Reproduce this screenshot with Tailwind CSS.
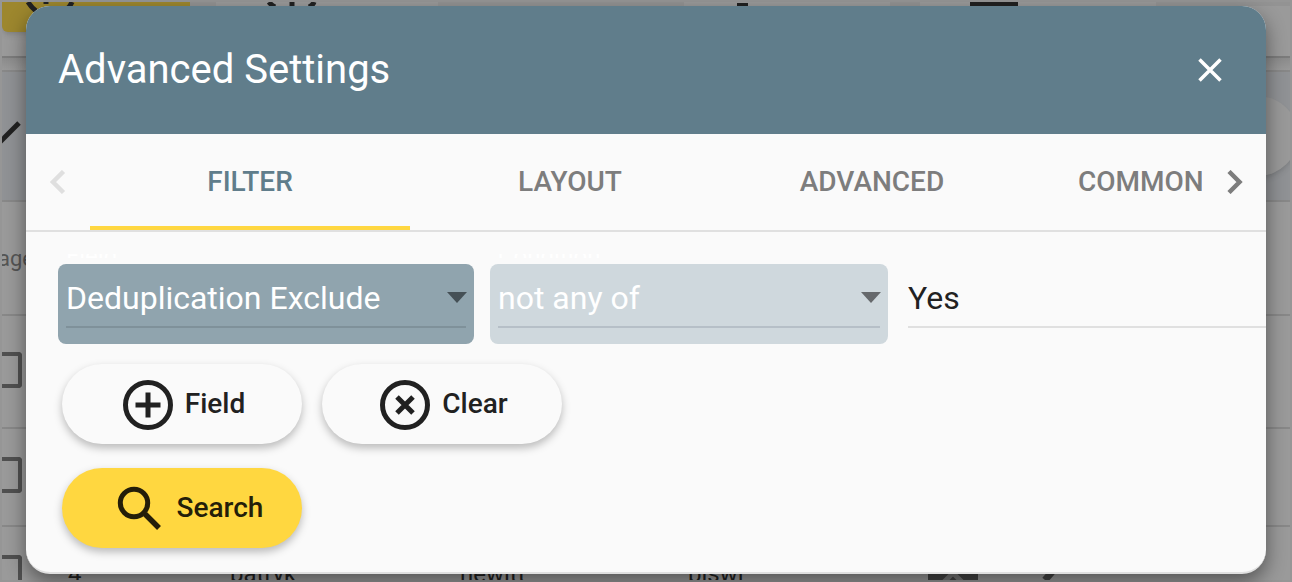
<!DOCTYPE html>
<html lang="en">
<head>
<meta charset="utf-8">
<meta name="viewport" content="width=device-width, initial-scale=1">
<title>Advanced Settings</title>
<script src="https://cdn.jsdelivr.net/npm/@tailwindcss/browser@4"></script>
</head>
<body class="bg-[#999] font-[Roboto,sans-serif] text-[#212121]">
<div class="relative flex min-h-screen flex-col overflow-hidden">

  <!-- Dimmed page behind the dialog -->
  <div class="absolute inset-0 overflow-hidden border-2 border-[#969696] bg-[#9a9a9a]" aria-hidden="true">
    <div class="flex h-14 items-start border-b-2 border-[#7c7c7c]">
      <div class="h-[30px] w-[188px] rounded-b-md bg-[#9d872e] shadow-md"></div>
    </div>
    <div class="h-3 bg-linear-to-b from-[#8c8c8c] to-[#999]"></div>
    <div class="flex h-[132px] items-center justify-between border-y-2 border-y-[#888] bg-[#909295]">
      <svg class="mb-2 h-6 w-5" viewBox="0 0 20 24"><path d="M-2 22 17 3" stroke="#212121" stroke-width="5"/></svg>
      <div class="-mr-2 size-20 rounded-full bg-[#999] shadow-md"></div>
    </div>
    <div class="flex h-[114px] items-center border-b-2 border-[#888]"><span class="-ml-1 text-[22px] text-[#555]">age</span></div>
    <div class="flex h-[113px] items-center border-b-2 border-[#888] pb-1"><div class="h-9 w-5 rounded-r border-4 border-l-0 border-[#505050]"></div></div>
    <div class="flex h-[98px] items-center border-b-2 border-[#888] pb-1"><div class="h-9 w-5 rounded-r border-4 border-l-0 border-[#505050]"></div></div>
    <div class="flex items-start pt-7"><div class="h-9 w-5 rounded-r border-4 border-l-0 border-[#505050]"></div></div>
    <svg class="absolute top-0 left-0 h-1 w-[1290px]" viewBox="0 0 1290 4">
      <path d="M188 0h26v4h-26zM436 0h246v4h-246zM888 0h30v4h-30zM1154 0h134v4h-134z" fill="#939393"/>
      <path d="M968 0h48v4h-48zM735 1h11v3h-11z" fill="#212121"/>
      <path d="M267 0q2 3 6 5M290 0v4M312 0q-1 3-5 5" stroke="#212121" stroke-width="5" fill="none"/>
    </svg>
    <svg class="absolute top-0 left-0 h-8 w-20" viewBox="0 0 80 32"><path d="M26 0q3 5 8 9M44 0v2M70 0q-2 5-6 8" stroke="#212121" stroke-width="5" fill="none"/></svg>
    <div class="absolute top-[560px] left-[66px] flex text-2xl leading-6 text-[#212121]">
      <span class="w-[162px]">4</span><span class="w-[230px]">patryk</span><span class="w-[228px]">hewitt</span><span class="w-60">biswi</span>
      <svg class="h-6 w-32" viewBox="0 0 128 24"><path d="M0 5h50v19H0z" fill="#444"/><path d="m12 24 13-13 13 13" stroke="#777" stroke-width="5" fill="none"/><path d="m117 18 7-8" stroke="#444" stroke-width="7"/></svg>
    </div>
  </div>

  <section role="dialog" aria-labelledby="title" class="relative mx-[26px] mt-1.5 mb-2 flex flex-1 flex-col overflow-hidden rounded-3xl border-b-2 border-[#e0e0e0] bg-[#fafafa] shadow-[0_8px_20px_0_rgba(0,0,0,0.45)]">
    <header class="flex h-32 shrink-0 items-center justify-between bg-[#607d8b] px-8 text-white">
      <h1 id="title" class="text-[40px] leading-12">Advanced Settings</h1>
      <button type="button" aria-label="Close" class="grid size-12 place-items-center">
        <svg class="size-6" viewBox="0 0 24 24" fill="none" stroke="currentColor" stroke-width="3.500"><path d="m1.500 1.500 21 21M22.500 1.500l-21 21"/></svg>
      </button>
    </header>

    <nav class="flex h-[98px] shrink-0 border-b-2 border-[#e0e0e0] text-[28px] font-medium text-[#7d7d7d]">
      <button type="button" disabled aria-label="Previous tabs" class="grid w-16 shrink-0 place-items-center text-[#dfdfdf]">
        <svg class="size-6" viewBox="0 0 24 24" fill="none" stroke="currentColor" stroke-width="4.500"><path d="M17.500 1.500 7 12l10.500 10.500"/></svg>
      </button>
      <div role="tablist" class="flex min-w-0 flex-1 overflow-hidden">
        <button type="button" role="tab" aria-selected="true" class="w-80 shrink-0 border-b-4 border-[#ffd740] pt-1 text-[#607d8b]">FILTER</button>
        <button type="button" role="tab" class="w-80 shrink-0">LAYOUT</button>
        <button type="button" role="tab" class="w-[284px] shrink-0">ADVANCED</button>
        <button type="button" role="tab" class="shrink-0 px-16">COMMON</button>
      </div>
      <button type="button" aria-label="Next tabs" class="grid w-16 shrink-0 place-items-center text-[#7d7d7d]">
        <svg class="size-6" viewBox="0 0 24 24" fill="none" stroke="currentColor" stroke-width="4.500"><path d="M7 1.500 17.500 12 7 22.500"/></svg>
      </button>
    </nav>

    <form class="flex flex-col pt-8 pl-8" onsubmit="return false">
      <div class="flex">
        <div class="relative mr-4 h-20 w-[416px] shrink-0 rounded-lg bg-[#90a4ae] px-2">
          <label for="field" class="absolute -top-2.5 left-2 h-1 overflow-hidden text-2xl leading-1 text-white">Field</label>
          <select id="field" class="h-16 w-full appearance-none border-b-2 border-[#7f919a] pt-1.5 text-[32px] text-white outline-none"><option>Deduplication Exclude</option></select>
          <svg class="pointer-events-none absolute top-7 right-[7px] h-3 w-5" viewBox="0 0 20 12"><path d="M0 0h20L10 11z" fill="#455056"/></svg>
        </div>
        <div class="relative mr-5 h-20 w-[398px] shrink-0 rounded-lg bg-[#cfd8dd] px-2">
          <label for="condition" class="absolute -top-2.5 left-2 h-1 overflow-hidden text-2xl leading-1 text-white">Condition</label>
          <select id="condition" class="h-16 w-full appearance-none border-b-2 border-[#b6bfc7] pt-1.5 text-[32px] text-white outline-none"><option>not any of</option></select>
          <svg class="pointer-events-none absolute top-7 right-[7px] h-3 w-5" viewBox="0 0 20 12"><path d="M0 0h20L10 11z" fill="#66696c"/></svg>
        </div>
        <input aria-label="Value" value="Yes" class="h-16 min-w-0 flex-1 border-b-2 border-[#e0e0e0] pt-1.5 text-[32px] outline-none">
      </div>
      <div class="mt-5 ml-1 flex gap-5 text-[28px] font-medium">
        <button type="button" class="flex h-20 w-60 items-center justify-center gap-3 rounded-full bg-[#fafafa] pl-1 shadow-[0_4px_8px_rgba(0,0,0,0.26)]">
          <svg class="mt-0.5 h-[50px] w-[50px]" viewBox="0 0 50 50" fill="none" stroke="currentColor" stroke-width="5"><circle cx="25" cy="25" r="22.500"/><path d="M25 12.500v25M12.500 25h25"/></svg>
          <span>Field</span>
        </button>
        <button type="button" class="flex h-20 w-60 items-center justify-center gap-3 rounded-full bg-[#fafafa] pl-1 shadow-[0_4px_8px_rgba(0,0,0,0.26)]">
          <svg class="mt-0.5 h-[50px] w-[50px]" viewBox="0 0 50 50" fill="none" stroke="currentColor" stroke-width="5"><circle cx="25" cy="25" r="22.500"/><path d="m17 17 16 16M33 17 17 33"/></svg>
          <span>Clear</span>
        </button>
      </div>
      <button type="submit" class="mt-6 mb-6 ml-1 flex h-20 w-60 items-center justify-center gap-4 rounded-full bg-[#ffd740] pl-4 text-[28px] font-medium text-[#241e09] shadow-[0_4px_8px_rgba(0,0,0,0.26)]">
        <svg class="h-11 w-11" viewBox="0 0 44 44" fill="none" stroke="currentColor"><circle cx="17" cy="17" r="13.700" stroke-width="5"/><path d="m28 28 14 14" stroke-width="5.500"/></svg>
        <span>Search</span>
      </button>
    </form>
  </section>
</div>
</body>
</html>
